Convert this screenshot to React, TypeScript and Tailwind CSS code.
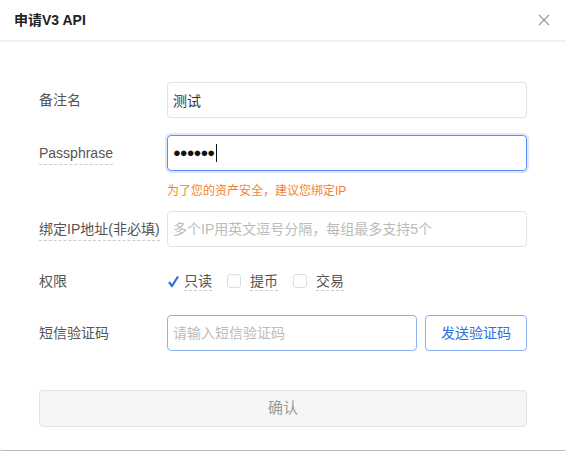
import React from "react";

const font = { fontFamily: '"Liberation Sans", "Noto Sans CJK SC", sans-serif' };

function Row({ label, dashed, children }: { label: string; dashed?: boolean; children: React.ReactNode }) {
  return (
    <div className="flex items-center h-[36px]">
      <div className="w-[128px] shrink-0 text-[14px] text-[#555]">
        <span className={dashed ? "border-b border-dashed border-[#ccc] pb-[3px]" : ""}>{label}</span>
      </div>
      <div className="flex-1 flex items-center h-full gap-2">{children}</div>
    </div>
  );
}

function Check({ label, checked }: { label: string; checked?: boolean }) {
  return (
    <label className="flex items-center mr-[7px]">
      {checked ? (
        <svg width="11" height="13" viewBox="0 0 11 13" className="mr-[5px] ml-[1px]">
          <path d="M1 7 L4 11 L10 1.5" fill="none" stroke="#2f6fe0" strokeWidth="2.2" strokeLinejoin="round" />
        </svg>
      ) : (
        <span className="w-[14px] h-[14px] border border-[#ddd] rounded-[3px] mr-[9px]" />
      )}
      <span className="text-[14px] text-[#555] border-b border-dashed border-[#ccc] leading-[18px]">{label}</span>
    </label>
  );
}

export default function App() {
  return (
    <div className="w-[566px] h-[451px] bg-white border-b border-[#bbb] rounded-b-[2px] overflow-hidden" style={font}>
      <div className="h-[42px] flex items-center justify-between pl-[14px] pr-[16px] border-b-2 border-[#f3f3f3]">
        <span className="text-[14px] font-bold text-[#222]">申请V3 API</span>
        <svg width="12" height="12" viewBox="0 0 12 12">
          <path d="M1 1 L11 11 M11 1 L1 11" stroke="#999" strokeWidth="1.2" />
        </svg>
      </div>
      <div className="px-[39px] pt-[40px]">
        <Row label="备注名">
          <input
            defaultValue="测试"
            className="w-full h-full border border-[#e3e3e3] rounded-[4px] px-[5px] text-[14px] text-[#333] outline-none"
          />
        </Row>
        <div className="mt-[17px]">
          <Row label="Passphrase" dashed>
            <div className="w-full h-full border border-[#5b8ff5] rounded-[4px] px-[5px] flex items-center shadow-[0_0_0_2px_#dbe7fd]">
              <span className="text-[13px] text-[#111] tracking-[-1px]">●●●●●●</span>
              <span className="w-px h-[18px] bg-[#111] ml-[2px]" />
            </div>
          </Row>
        </div>
        <div className="pl-[128px] h-[40px] flex items-center text-[12px] text-[#f5822a]">为了您的资产安全，建议您绑定IP</div>
        <Row label="绑定IP地址(非必填)" dashed>
          <input
            placeholder="多个IP用英文逗号分隔，每组最多支持5个"
            className="w-full h-full border border-[#e3e3e3] rounded-[4px] px-[5px] text-[14px] text-[#333] placeholder:text-[#bbb] outline-none"
          />
        </Row>
        <div className="mt-[16px]">
          <Row label="权限">
            <Check label="只读" checked />
            <Check label="提币" />
            <Check label="交易" />
          </Row>
        </div>
        <div className="mt-[16px]">
          <Row label="短信验证码">
            <input
              placeholder="请输入短信验证码"
              className="w-[250px] h-full border border-[#8cb0f5] rounded-[4px] px-[5px] text-[14px] text-[#333] placeholder:text-[#bbb] outline-none"
            />
            <button className="flex-1 h-full border border-[#8cb0f5] rounded-[4px] text-[14px] text-[#2f6fdf] bg-white">
              发送验证码
            </button>
          </Row>
        </div>
        <button className="mt-[39px] w-full h-[37px] bg-[#f6f6f6] border border-[#e3e3e3] rounded-[4px] text-[15px] text-[#999]">
          确认
        </button>
      </div>
    </div>
  );
}
